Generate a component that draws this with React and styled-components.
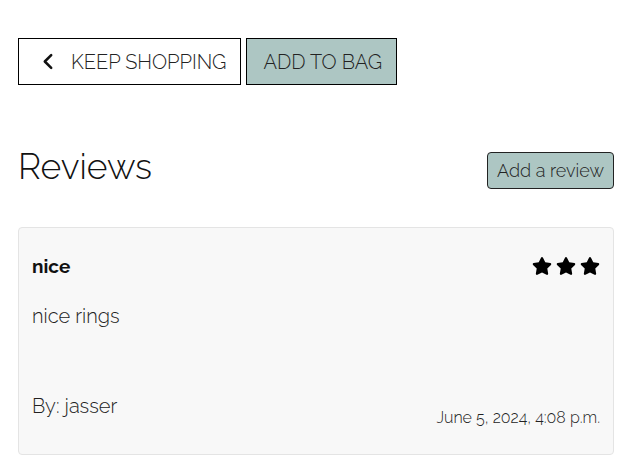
import styled, { createGlobalStyle } from "styled-components";
import { FaStar } from "react-icons/fa";

const GlobalStyle = createGlobalStyle`
  body {
    margin: 0;
    background: #fff;
    color: #222;
    font-family: Raleway, Lato, "Open Sans", sans-serif;
    font-weight: 300;
  }
`;

function App() {
  return (
    <>
      <GlobalStyle />
      <Page>
        <Actions>
          <OutlineButton>
            <Chevron viewBox="0 0 12 16" aria-hidden="true">
              <path d="M9 2 L3 8 L9 14" />
            </Chevron>
            KEEP SHOPPING
          </OutlineButton>
          <FilledButton>ADD TO BAG</FilledButton>
        </Actions>

        <ReviewsHeader>
          <Heading>Reviews</Heading>
          <AddReview>Add a review</AddReview>
        </ReviewsHeader>

        <ReviewCard>
          <CardTop>
            <ReviewTitle>nice</ReviewTitle>
            <Stars>
              {[0, 1, 2].map((i) => (
                <FaStar key={i} />
              ))}
            </Stars>
          </CardTop>
          <ReviewBody>nice rings</ReviewBody>
          <CardBottom>
            <Author>By: jasser</Author>
            <Stamp>June 5, 2024, 4:08 p.m.</Stamp>
          </CardBottom>
        </ReviewCard>
      </Page>
    </>
  );
}

const Page = styled.main`
  padding: 38px 15px 16px 18px;
`;

const Actions = styled.div`
  display: flex;
  gap: 5px;
`;

const OutlineButton = styled.button`
  display: flex;
  align-items: center;
  gap: 16px;
  height: 47px;
  padding: 0 14px 0 22px;
  background: #fff;
  border: 1px solid #000;
  border-radius: 0;
  font-family: inherit;
  font-weight: 300;
  font-size: 20px;
  color: #222;
`;

const FilledButton = styled(OutlineButton)`
  padding: 0 14px 0 16px;
  background: #adc6c3;
`;

const Chevron = styled.svg`
  width: 14px;
  height: 17px;
  fill: none;
  stroke: #111;
  stroke-width: 2.4;
  stroke-linecap: round;
  stroke-linejoin: round;
`;

const ReviewsHeader = styled.div`
  display: flex;
  justify-content: space-between;
  align-items: flex-start;
  margin-top: 60px;
`;

const Heading = styled.h2`
  margin: 0;
  font-size: 35.5px;
  font-weight: 300;
  line-height: 44px;
  color: #111;
`;

const AddReview = styled.button`
  margin-top: 7px;
  height: 37px;
  padding: 0 9px;
  background: #adc6c3;
  border: 1px solid #222;
  border-radius: 4px;
  font-family: inherit;
  font-weight: 300;
  font-size: 18px;
  color: #222;
`;

const ReviewCard = styled.section`
  margin-top: 38px;
  padding: 27px 13px 36px 13px;
  background: #f8f8f8;
  border: 1px solid #e4e4e4;
  border-radius: 4px;
`;

const CardTop = styled.div`
  display: flex;
  justify-content: space-between;
  align-items: center;
`;

const ReviewTitle = styled.h3`
  margin: 0;
  font-size: 19px;
  font-weight: 700;
  color: #111;
`;

const Stars = styled.div`
  display: flex;
  gap: 4px;
  font-size: 20px;
  color: #000;
`;

const ReviewBody = styled.p`
  margin: 27px 0 0;
  font-size: 20px;
  color: #222;
`;

const CardBottom = styled.div`
  display: flex;
  justify-content: space-between;
  align-items: flex-end;
  margin-top: 66px;
`;

const Author = styled.span`
  font-size: 20px;
  color: #222;
`;

const Stamp = styled.span`
  font-size: 16px;
  color: #222;
  margin-bottom: -9px;
`;

export default App;
